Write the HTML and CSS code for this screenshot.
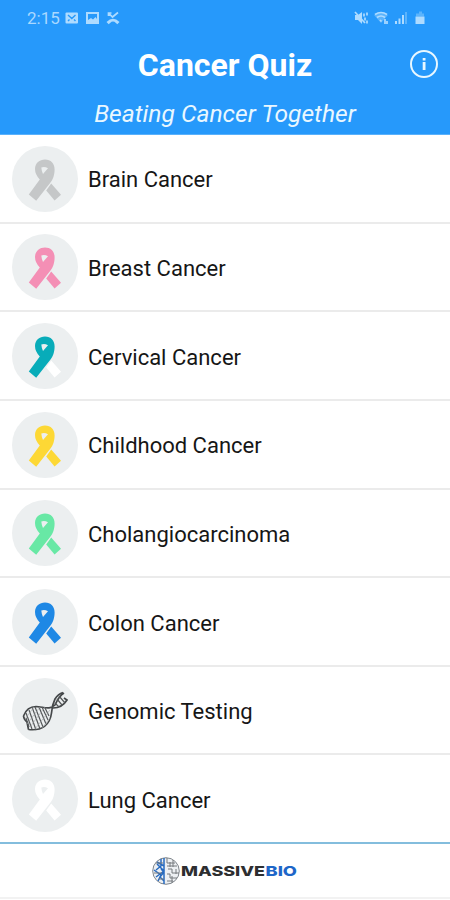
FILE: index.html
```html
<!DOCTYPE html>
<html lang="en">
<head>
<meta charset="utf-8">
<title>Cancer Quiz</title>
<link rel="stylesheet" href="styles.css">
</head>
<body>
<svg class="defs" aria-hidden="true">
  <symbol id="ribbon" viewBox="0 0 66 66">
    <path class="back" d="M39.200 37.400 49 48.800 42.600 54.600 34.200 44.600Z"/>
    <path class="front" fill-rule="evenodd" d="M16.800 48.600 27.800 33.500Q23 28.500 23 23C23.200 17 27.500 13.500 33 13.500C38.800 13.500 42.700 17.500 42.600 23.500C42.500 29.500 41 33 38.500 36.600L24.200 54.800ZM29.300 21.500Q29.600 25 31 28L36 22.200Q32.500 20.300 29.300 21.500Z"/>
  </symbol>
</svg>
<header class="header">
  <div class="status">
    <span class="clock">2:15</span>
    <svg class="left-icons" width="56" height="16" viewBox="0 0 56 16">
      <rect x="1.500" y="2.500" width="12.500" height="11" rx="1"/><path class="cut" d="m4 5 3.800 3.500L11.500 5M4 11l1.500-1.500m6 1.500-1.500-1.500"/>
      <path fill-rule="evenodd" d="M22 2h13v12H22ZM24 4v6l3-2 2 1.500L31.500 7 33 9V4Z"/>
      <path class="line" d="m44.500 3 4 4 5.500-4.500M44.500 6V3h3"/><path d="M42.500 12q6.500-6.500 13 0l-2.200 2.300-2.800-2.500q-1.500-.5-3 0l-2.800 2.500Z"/>
    </svg>
    <svg class="right-icons" width="74" height="16" viewBox="0 0 74 16">
      <path d="M2 5h3l4-3v12l-4-4H2Z"/><path class="line" d="m2 2 10 11M11 3.500v3m3-4v3m-2 2v3m2 0v3"/>
      <path class="faint" d="M21 5q7-6 14 0l-7 8Z"/><path class="line" d="M22 4.500q6-4 12 0M24 7.500q4-3 8 0M27 10l1.500 1.500M32 9v5m2-3v3"/>
      <path class="faint" d="M52 2h2v12h-2z"/><path d="M42 11h2v3h-2zM45.500 8.500h2V14h-2zM49 5h2v9h-2z"/>
      <path class="faint" d="M66 1.500h3v2h2v3h-8v-3h3Z"/><path d="M62.500 6.500h9V14h-9z"/>
    </svg>
  </div>
  <div class="titlebar">
    <h1>Cancer Quiz</h1>
    <svg class="info" width="28" height="28" viewBox="0 0 28 28"><circle cx="14" cy="14" r="13"/><path d="M12.700 8h2.800v2.500h-2.800zM12.700 12h2.800v8h-2.800z"/></svg>
  </div>
  <p class="tagline">Beating Cancer Together</p>
</header>
<main class="list">
  <div class="row"><span class="badge gray"><svg><use href="#ribbon"/></svg></span><span class="label">Brain Cancer</span></div>
  <div class="row"><span class="badge pink"><svg><use href="#ribbon"/></svg></span><span class="label">Breast Cancer</span></div>
  <div class="row"><span class="badge teal"><svg><use href="#ribbon"/></svg></span><span class="label">Cervical Cancer</span></div>
  <div class="row"><span class="badge gold"><svg><use href="#ribbon"/></svg></span><span class="label">Childhood Cancer</span></div>
  <div class="row"><span class="badge green"><svg><use href="#ribbon"/></svg></span><span class="label">Cholangiocarcinoma</span></div>
  <div class="row"><span class="badge blue"><svg><use href="#ribbon"/></svg></span><span class="label">Colon Cancer</span></div>
  <div class="row"><span class="badge"><svg class="dna" viewBox="0 0 66 66">
    <path class="strand" d="M11.500 38Q15 28.500 24 28.500C32 29 38 32 43 27Q47 18 52 15M16.500 51.500C30 53 38 47 39.500 35Q40 27 43 21Q46 16 51 14.500M11.500 38Q12 42 15 44L16.500 51.500M41 30Q50 30 55 22L52 20"/>
    <path class="rungs" d="m14 35 6 16m-3-19 7 20m-4-23 8 22m-5-22 8 20m-4-20 7 17m-4-17 6 13m-3-12 4 8M14 40l3 9M43 25l4 4m-2-8 5 6m-3-9 6 7"/>
    <path class="rungs light" d="m13 41 9-12m-7 17 13-17M18 49l15-20M23 51l15-19M30 50l8-10"/>
  </svg></span><span class="label">Genomic Testing</span></div>
  <div class="row"><span class="badge white"><svg><use href="#ribbon"/></svg></span><span class="label">Lung Cancer</span></div>
</main>
<footer class="footer">
  <svg class="logo" width="148" height="32" viewBox="0 0 148 32">
    <circle class="globe" cx="15" cy="16" r="13.300"/>
    <path class="globe-blue" d="M13 3v26M10 4v7l-5 4m1-6 7 7-8 6M3 15l7 5-3 6m3-12 3 3-4 5 4 4M6 7l7 4"/>
    <path class="globe-gray" d="M16 3v5h8M16 11h10M17 14h4v4h7M16 19h3v4h7M16 26h6M22 5v7M25 14v5M19 7v5M21 21v7M5 8h7M3 18h8M8 24h5"/>
    <text x="30" y="20.800" textLength="84" lengthAdjust="spacingAndGlyphs">MASSIVE</text>
    <text class="bio" x="114.500" y="20.800" textLength="31.500" lengthAdjust="spacingAndGlyphs">BIO</text>
  </svg>
</footer>
</body>
</html>
```
FILE: styles.css
```css
* { box-sizing: border-box; }
body { margin: 0; height: 900px; display: flex; flex-direction: column; overflow: hidden; background: #fff; color: #161616; font-family: Roboto, "Liberation Sans", sans-serif; }
.defs { display: none; }
.header { height: 135px; flex: none; background: #2699fb; color: #fff; border-bottom: 1px solid #5ab1fb; }
.status { height: 36px; padding: 0 23px 0 27px; display: flex; align-items: center; color: #a9d8ff; }
.clock { font-size: 17px; line-height: 20px; width: 37px; }
.status svg { fill: #aedbff; }
.right-icons { margin-left: auto; }
.status .cut { fill: none; stroke: #2699fb; stroke-width: 1.4; }
.status .line { fill: none; stroke: #aedbff; stroke-width: 1.7; }
.status .faint { opacity: .4; }
.titlebar { height: 56px; display: grid; grid-template-columns: 1fr auto 1fr; align-items: center; }
h1 { grid-column: 2; margin: 2px 0 0; font-size: 32px; line-height: 40px; font-weight: 700; }
.info { justify-self: end; margin-right: 12px; fill: #e8f7ff; }
.info circle { fill: none; stroke: #e8f7ff; stroke-width: 2; }
.tagline { margin: 7px 0 0; text-align: center; font-size: 24.6px; line-height: 30px; font-style: italic; color: #e9f7ff; }
.list { height: 707px; flex: none; display: grid; grid-template-rows: repeat(8, 88.65px); }
.row { display: flex; align-items: center; padding: 1px 0 0 12px; border-bottom: 2px solid #ebebeb; }
.row:last-child { border-bottom-color: transparent; }
.badge { width: 66px; height: 66px; flex: none; border-radius: 50%; background: #eceff0; color: #c5c7c8; --back: currentColor; }
.badge svg { display: block; width: 66px; height: 66px; }
.front { fill: currentColor; }
.back { fill: var(--back); }
.pink { color: #f48fb5; }
.teal { color: #08acb9; --back: #fff; }
.gold { color: #fdd835; }
.green { color: #68e8a5; }
.blue { color: #1e88e5; }
.white { color: #fff; }
.label { margin: 3px 0 0 10px; font-size: 22px; line-height: 30px; }
.dna { fill: none; }
.strand { stroke: #45484a; stroke-width: 1.7; }
.rungs { stroke: #55585a; stroke-width: 1.2; }
.rungs.light { stroke: #a0a3a5; stroke-width: .6; }
.footer { height: 57px; flex: none; border-top: 2px solid #83bddd; border-bottom: 2px solid #f2f2f2; display: flex; align-items: center; justify-content: center; }
.logo { font: 800 13.8px Inter, "Liberation Sans", sans-serif; fill: #2d2e30; }
.bio { fill: #1e66c8; }
.globe { fill: #edf0f3; stroke: #80868c; stroke-width: 1; }
.globe-blue { fill: none; stroke: #286bc0; stroke-width: 1.5; }
.globe-gray { fill: none; stroke: #767a7e; stroke-width: 1; }
```
